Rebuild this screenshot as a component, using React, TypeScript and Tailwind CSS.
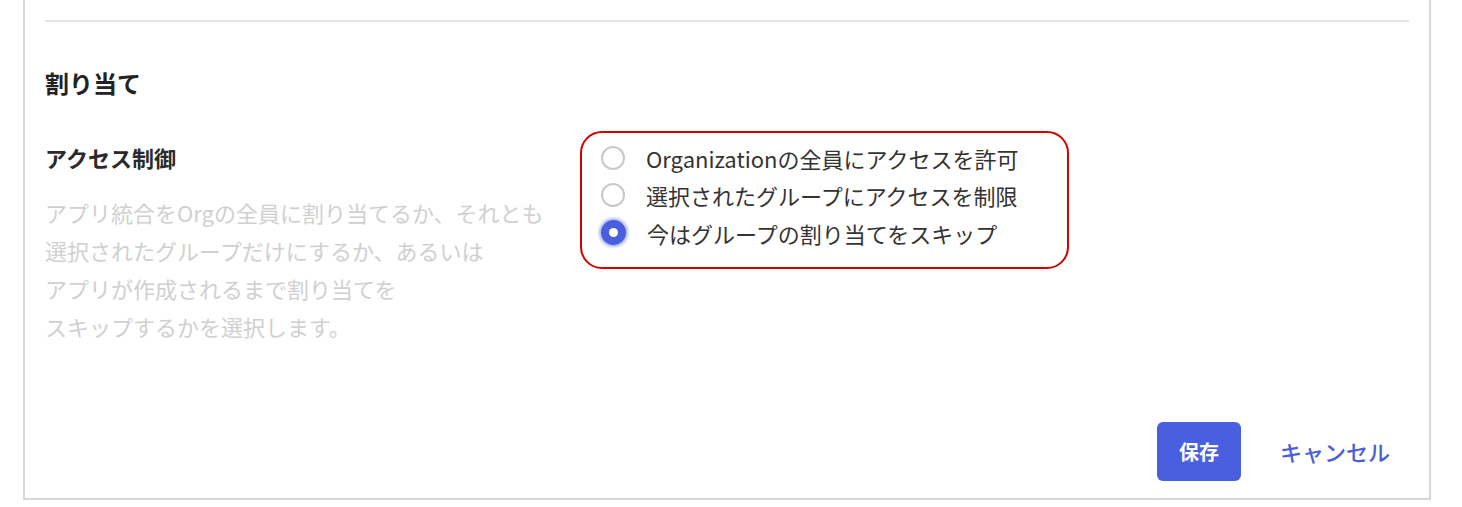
const options = [
  { label: "Organizationの全員にアクセスを許可", checked: false },
  { label: "選択されたグループにアクセスを制限", checked: false },
  { label: "今はグループの割り当てをスキップ", checked: true },
];

const description = [
  "アプリ統合をOrgの全員に割り当てるか、それとも",
  "選択されたグループだけにするか、あるいは",
  "アプリが作成されるまで割り当てを",
  "スキップするかを選択します。",
];

function Radio({ checked }: { checked: boolean }) {
  if (checked) {
    return (
      <span className="flex h-[25px] w-[25px] shrink-0 items-center justify-center rounded-full bg-[#4a5fe0] shadow-[0_0_3px_2px_rgba(74,95,224,0.45)]">
        <span className="h-[9px] w-[9px] rounded-full bg-white" />
      </span>
    );
  }
  return <span className="h-[24px] w-[24px] shrink-0 rounded-full border-2 border-[#c9c9c9] bg-white" />;
}

export default function App() {
  return (
    <div
      className="h-[507px] w-full overflow-hidden bg-white"
      style={{ fontFamily: '"Noto Sans CJK JP", "Noto Sans", sans-serif' }}
    >
      <div className="ml-[23px] mr-[31px] flex h-[500px] flex-col border-x-2 border-b-2 border-[#d8d8d8] px-[20px]">
        <div className="mt-[20px] h-[2px] bg-[#e6e6e6]" />

        <h2 className="mt-[45px] text-[24px] font-bold leading-[32px] text-[#222]">割り当て</h2>

        <div className="mt-[32px] flex">
          <div className="w-[535px] shrink-0">
            <div className="pt-[11px] text-[22px] font-bold leading-[30px] text-[#2a2a2a]">アクセス制御</div>
            <div className="mt-[21px] text-[22px] leading-[38px] text-[#d0d0d0]">
              {description.map((line) => (
                <div key={line}>{line}</div>
              ))}
            </div>
          </div>

          <div className="h-[138px] w-[489px] rounded-[22px] border-2 border-[#d40000] pl-[19px] pt-[6px]">
            {options.map((o) => (
              <label key={o.label} className="flex h-[37.5px] items-center gap-[21px]">
                <Radio checked={o.checked} />
                <span className="text-[22px] leading-[30px] text-[#333]">{o.label}</span>
              </label>
            ))}
          </div>
        </div>

        <div className="mt-auto mb-[17px] flex items-center justify-end gap-[20px]">
          <button
            type="button"
            className="h-[59px] w-[84px] rounded-[6px] bg-[#4a5fe0] text-[20px] font-bold text-white"
          >
            保存
          </button>
          <button type="button" className="px-[19px] text-[22px] font-medium text-[#4a5fd6]">
            キャンセル
          </button>
        </div>
      </div>
    </div>
  );
}
